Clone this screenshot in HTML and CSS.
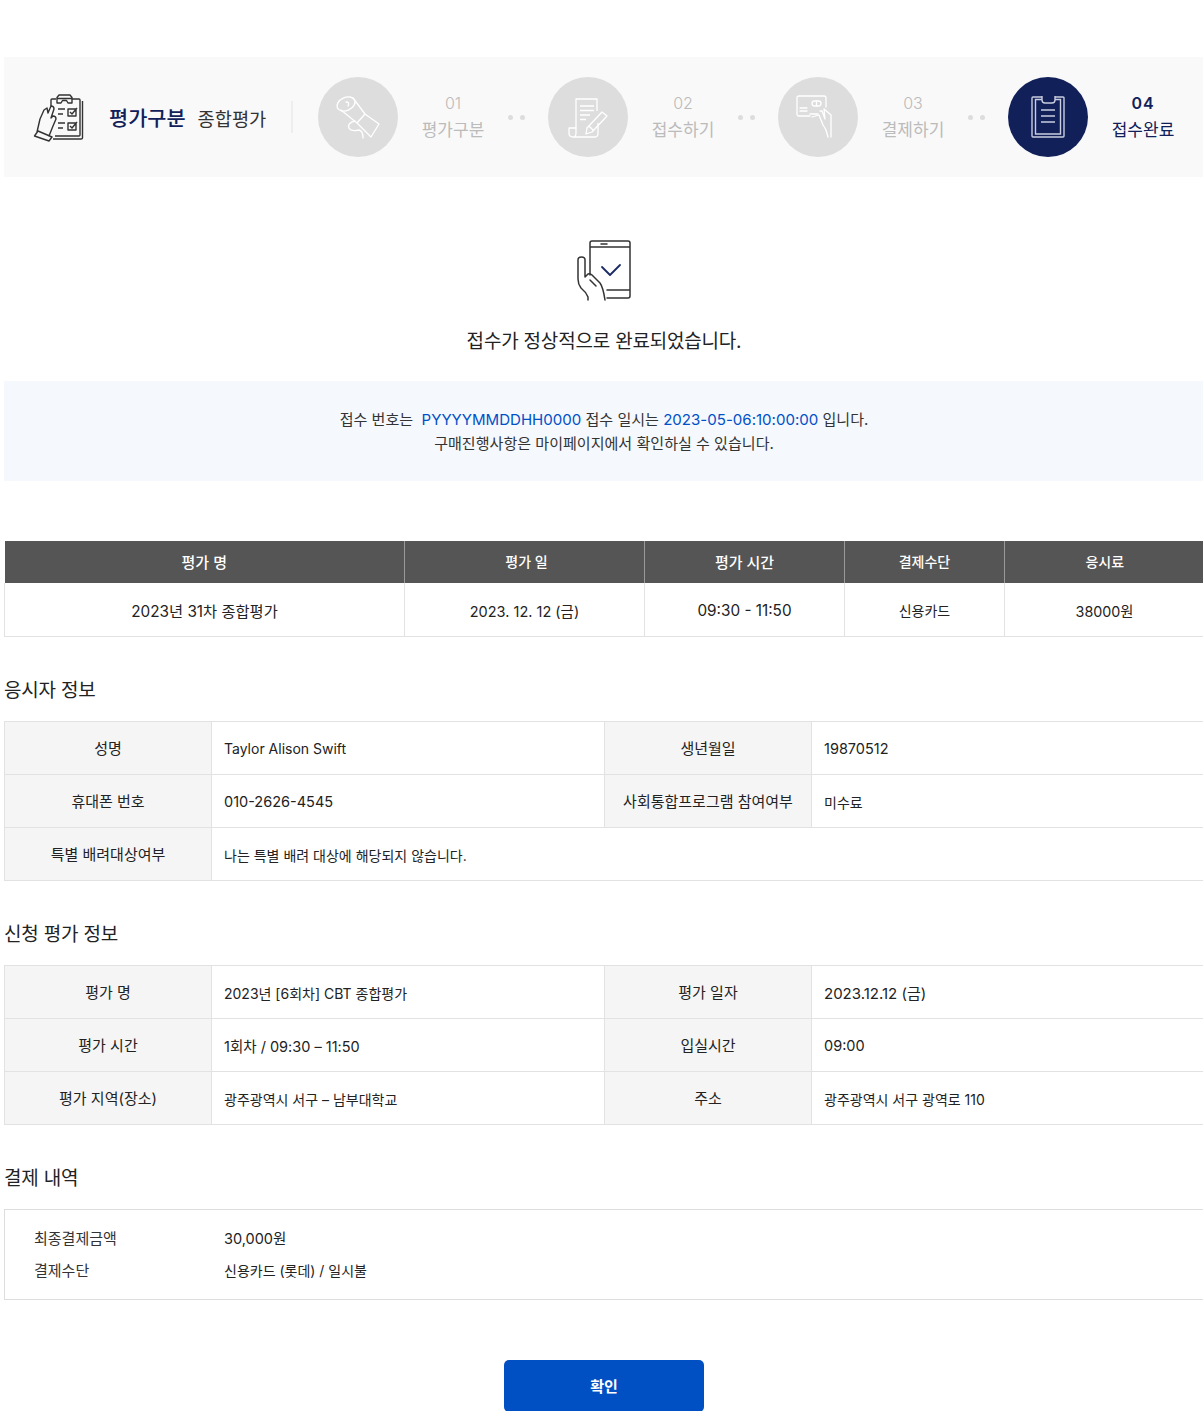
FILE: index.html
```html
<!DOCTYPE html>
<html lang="ko">
<head>
<meta charset="utf-8">
<title>접수완료</title>
<link rel="stylesheet" href="styles.css">
</head>
<body>
<main class="page">
  <section class="stepper">
    <div class="summary">
      <svg class="summary-icon" width="50" height="47" viewBox="0 0 50 47" fill="none" stroke="#333" stroke-width="1.4" stroke-linejoin="round">
        <path d="M17 12V6Q17 5 18 5H22M38 5H45Q46 5 46 6V41Q46 42 45 42H21M48.500 7V44Q48.500 45 47 45H19"/>
        <path d="M23 9V3.500L25 1H36L38 3.500V9H34L32.500 6.500H28.500L27 9ZM23 4.500H38"/>
        <path d="M24 15H31M24 20H29M24 29H31M24 34H29M34 15H42V22H34ZM34 29H42V36H34ZM36 18L38 20L43 14M36 32L38 34L43 28"/>
        <path d="M3 38L6 25L10 16L13 14L14 19L17 12Q20 12 20 15L17 24L19 22Q22 22 22 25L19 32L15 42M0.500 42L4 37L18 43L15 47L0.500 42Z" stroke-linecap="round"/>
      </svg>
      <strong class="summary-title">평가구분</strong>
      <span class="summary-value">종합평가</span>
    </div>
    <ol class="steps">
      <li class="step">
        <span class="step-circle">
          <svg width="46" height="46" viewBox="0 0 46 46" fill="none" stroke="#fff" stroke-width="1.300" stroke-linejoin="round" stroke-linecap="round">
            <ellipse cx="11" cy="10" rx="9.500" ry="6.500" transform="rotate(-25 11 10)"/>
            <path d="M18 4L30 20L44 30L36 43L22 29L6 16M11 8Q15 8 13 12M30 20L22 29M20 27Q12 29 14 34Q16 38 24 36Q28 37 28 44"/>
          </svg>
        </span>
        <span class="step-label"><span class="step-no">01</span><span class="step-name">평가구분</span></span>
        <span class="dots"><i></i><i></i></span>
      </li>
      <li class="step">
        <span class="step-circle">
          <svg width="44" height="44" viewBox="0 0 44 44" fill="none" stroke="#fff" stroke-width="1.300" stroke-linejoin="round">
            <path d="M10 33V4H31V16M10 33H3V38Q3 42 7 42H29Q32 42 32 38V28M7 42Q10 42 10 38V33M14 11H28M14 15.500H28M14 20H24M14 24.500H20"/>
            <path d="M21 33L36 17L41 21L26 37L20 39ZM23 31L27 35"/>
          </svg>
        </span>
        <span class="step-label"><span class="step-no">02</span><span class="step-name">접수하기</span></span>
        <span class="dots"><i></i><i></i></span>
      </li>
      <li class="step">
        <span class="step-circle">
          <svg width="44" height="44" viewBox="0 0 44 44" fill="none" stroke="#fff" stroke-width="1.300" stroke-linejoin="round" stroke-linecap="round">
            <path d="M14 21H3Q1 21 1 19V3Q1 1 3 1H28Q30 1 30 3V12"/>
            <path d="M4 16H11M4 13H11M14 19H22"/><rect x="16" y="6" width="9" height="5" rx="2.500"/><path d="M20.500 6v5"/>
            <path d="M16 22L23 20L27 30Q29 33 30 35L32 42M24 16L26 16L29 24L28 14L35 20V42"/>
          </svg>
        </span>
        <span class="step-label"><span class="step-no">03</span><span class="step-name">결제하기</span></span>
        <span class="dots"><i></i><i></i></span>
      </li>
      <li class="step step-on">
        <span class="step-circle">
          <svg width="44" height="44" viewBox="0 0 44 44" fill="none" stroke="#c9cdde" stroke-width="1.400">
            <path d="M16 2H7Q6 2 6 3V41Q6 42 7 42H37Q38 42 38 41V3Q38 2 37 2H29M16 4.500H9.500V39H34.500V4.500H29"/>
            <path d="M16 1V5Q16 8 19 8H26Q29 8 29 5V1M15 15H29M15 21H29M15 27H29"/>
          </svg>
        </span>
        <span class="step-label"><span class="step-no">04</span><span class="step-name">접수완료</span></span>
      </li>
    </ol>
  </section>

  <section class="done">
    <svg width="56" height="62" viewBox="0 0 56 62" fill="none" stroke="#333" stroke-width="1.500" stroke-linejoin="round" stroke-linecap="round">
      <path d="M14 36V4Q14 2 16 2H52Q54 2 54 4V57Q54 59 52 59H31M14 8H54M25 5H31M31 51H54"/>
      <path d="M26 28L34 36L44 26" stroke="#1b2a63" stroke-width="1.800"/>
      <path d="M12 61V58Q10 53 5 49Q2 45 2 40V21Q2 18 5.500 18Q9 18 9 21V38L12 35Q14 34 16 36L24 44Q27 48 29 61M14 41L20 47"/>
    </svg>
    <h1 class="done-title">접수가 정상적으로 완료되었습니다.</h1>
  </section>

  <section class="notice">
    <p>접수 번호는 &nbsp;<em>PYYYYMMDDHH0000</em> 접수 일시는 <em>2023-05-06:10:00:00</em> 입니다.</p>
    <p>구매진행사항은 마이페이지에서 확인하실 수 있습니다.</p>
  </section>

  <table class="summary-table">
    <thead>
      <tr><th class="c-name">평가 명</th><th class="c-date th-small">평가 일</th><th class="c-time">평가 시간</th><th class="c-pay th-small">결제수단</th><th class="c-fee th-small">응시료</th></tr>
    </thead>
    <tbody>
      <tr><td class="large">2023년 31차 종합평가</td><td>2023. 12. 12 (금)</td><td class="large">09:30 - 11:50</td><td class="small">신용카드</td><td class="fee">38000원</td></tr>
    </tbody>
  </table>

  <h2 class="section-title">응시자 정보</h2>
  <table class="info">
    <tbody>
      <tr><th>성명</th><td class="small">Taylor Alison Swift</td><th>생년월일</th><td>19870512</td></tr>
      <tr><th>휴대폰 번호</th><td>010-2626-4545</td><th>사회통합프로그램 참여여부</th><td class="small">미수료</td></tr>
      <tr><th>특별 배려대상여부</th><td colspan="3" class="small">나는 특별 배려 대상에 해당되지 않습니다.</td></tr>
    </tbody>
  </table>

  <h2 class="section-title">신청 평가 정보</h2>
  <table class="info">
    <tbody>
      <tr><th>평가 명</th><td class="small">2023년 [6회차] CBT 종합평가</td><th>평가 일자</th><td class="wide">2023.12.12 (금)</td></tr>
      <tr><th>평가 시간</th><td>1회차 / 09:30 – 11:50</td><th>입실시간</th><td>09:00</td></tr>
      <tr><th>평가 지역(장소)</th><td class="small">광주광역시 서구 – 남부대학교</td><th>주소</th><td class="small">광주광역시 서구 광역로 110</td></tr>
    </tbody>
  </table>

  <h2 class="section-title">결제 내역</h2>
  <dl class="payment">
    <div class="pay-row"><dt>최종결제금액</dt><dd>30,000원</dd></div>
    <div class="pay-row"><dt>결제수단</dt><dd class="small">신용카드 (롯데) / 일시불</dd></div>
  </dl>

  <div class="actions"><button class="confirm" type="button">확인</button></div>
</main>
</body>
</html>
```
FILE: styles.css
```css
* { box-sizing: border-box; }
html, body { margin: 0; padding: 0; overflow-x: hidden; }
body { background: #fff; color: #222; font-family: "Inter", "Noto Sans CJK KR", sans-serif; font-size: 15px; }
.page { width: 1200px; margin-left: 4px; padding-top: 57px; }

.stepper { display: flex; align-items: center; height: 120px; background: #f9f9f9; }
.summary { flex: none; display: flex; align-items: center; width: 289px; height: 32px; padding-left: 30px; border-right: 2px solid #eee; }
.summary-icon { flex: none; margin-right: 25px; overflow: visible; }
.summary-title { font-size: 20.8px; font-weight: 500; color: #12205a; margin-right: 12px; white-space: nowrap; }
.summary-value { font-size: 18.7px; color: #333; white-space: nowrap; }

.steps { display: flex; list-style: none; margin: 0 0 0 25px; padding: 0; }
.step { display: flex; align-items: center; width: 230px; }
.step-circle { flex: none; display: flex; align-items: center; justify-content: center; width: 80px; height: 80px; border-radius: 50%; background: #ddd; }
.step-label { flex: none; display: flex; flex-direction: column; align-items: center; width: 110px; color: #bbb; font-size: 17px; line-height: 26px; }
.step-no { font-size: 16px; font-weight: 300; line-height: 23px; margin-bottom: 2px; }
.step-name { white-space: nowrap; }
.dots { display: flex; gap: 7px; }
.dots i { width: 5px; height: 5px; border-radius: 50%; background: #ddd; }
.step-on .step-circle { background: #12205a; }
.step-on .step-label { color: #12205a; }
.step-on .step-no { font-weight: 600; letter-spacing: 1px; }

.done { display: flex; flex-direction: column; align-items: center; padding-top: 62px; }
.done-title { margin: 26px 0 0; font-size: 19px; letter-spacing: -0.2px; line-height: 30px; font-weight: 400; color: #222; }

.notice { margin-top: 24px; height: 100px; padding-top: 27px; background: #f5f8fc; text-align: center; font-size: 15.05px; line-height: 24px; color: #333; }
.notice p { margin: 0; }
.notice em { font-style: normal; color: #0050c8; }

table { border-collapse: collapse; table-layout: fixed; width: 1200px; }
.summary-table { margin-top: 60px; }
.summary-table th { height: 42px; background: #555; color: #fff; font-size: 15px; font-weight: 500; border-left: 1px solid #999; padding: 0 0 2px; }
.summary-table th:first-child { border-left: 0; }
.summary-table th.th-small { font-size: 14px; }
.summary-table th.c-date { padding-left: 4px; }
.summary-table td { height: 53px; text-align: center; font-size: 14.5px; border: 1px solid #e2e2e2; border-top: 0; padding: 2px 0 0; }
.summary-table td.large { font-size: 15.3px; }
.summary-table td.fee { font-size: 14.3px; }
.summary-table td.small { font-size: 14px; }
.c-name { width: 400px; }
.c-date { width: 240px; }
.c-time { width: 200px; }
.c-pay { width: 160px; }
.c-fee { width: 200px; }

.section-title { margin: 0; padding-top: 39px; height: 84px; font-size: 19px; letter-spacing: -0.2px; line-height: 30px; font-weight: 400; color: #222; }

.info { border-top: 1px solid #ddd; }
.info tr { height: 53px; }
.info th { width: 207px; background: #f5f5f5; font-weight: 400; font-size: 15px; color: #222; border: 1px solid #e2e2e2; padding: 0; }
.info td { width: 393px; padding: 2px 12px 0; font-size: 14.5px; border: 1px solid #e2e2e2; }
.info td.wide { font-size: 15px; }
.info td.small { font-size: 14px; }
.info tr > *:last-child { border-right: 0; }

.payment { margin: 0; height: 91px; padding: 12px 0 0 0; border: 1px solid #ddd; border-right: 0; }
.pay-row { display: flex; height: 32px; align-items: center; }
.payment dt { width: 219px; padding-left: 29px; font-size: 15px; color: #333; }
.payment dd { margin: 0; font-size: 14.5px; }
.payment dd.small { font-size: 14px; }

.actions { display: flex; justify-content: center; padding-top: 60px; }
.confirm { width: 200px; height: 52px; border: 0; border-radius: 5px; background: #0050c4; color: #fff; font: 600 15px "Inter", "Noto Sans CJK KR", sans-serif; }
```
